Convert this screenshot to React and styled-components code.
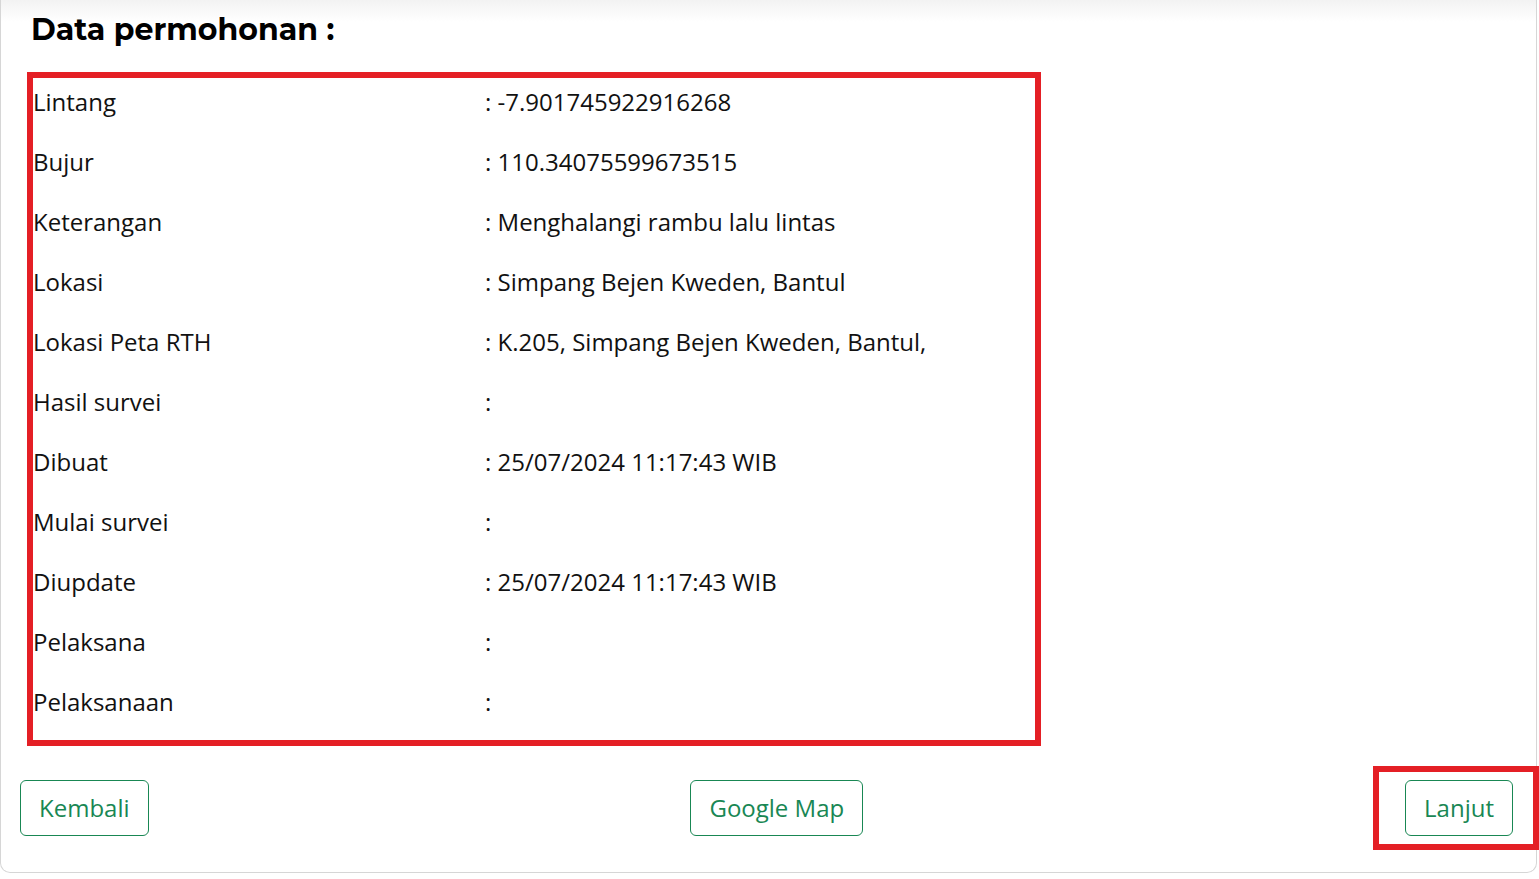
import React from 'react'
import styled, { createGlobalStyle } from 'styled-components'

const GlobalStyle = createGlobalStyle`
    body {
        margin: 0;
        background: #fff;
        font-family: "Open Sans", "Liberation Sans", sans-serif;
        color: #111;
    }
`

const Card = styled.div`
    box-sizing: border-box;
    width: 1537px;
    height: 881px;
    margin-top: -8px;
    padding: 8px 23px 0 19px;
    background: linear-gradient(#eeeeee, #ffffff 30px);
    border: 1px solid #d6d6d6;
    border-top: none;
    border-radius: 0 0 10px 10px;
    display: flex;
    flex-direction: column;
`

const Title = styled.h2`
    margin: 12px 0 0 11px;
    font-family: "Montserrat", Inter, "Noto Sans", sans-serif;
    font-weight: 700;
    font-size: 30px;
    line-height: 36px;
    color: #000;
`

const DetailBox = styled.div`
    margin: 24px 0 0 7px;
    width: 1014px;
    box-sizing: border-box;
    border: 6px solid #e41f25;
    padding: 6px 0 20px 0;
    display: flex;
    flex-direction: column;
    gap: 24px;
`

const Row = styled.div`
    display: flex;
    font-size: 24px;
    line-height: 36px;
`

const Label = styled.div`
    width: 452px;
    flex-shrink: 0;
`

const Value = styled.div`
    white-space: nowrap;
`

const Actions = styled.div`
    margin-top: 34px;
    display: flex;
    justify-content: space-between;
    align-items: center;
`

const OutlineButton = styled.button`
    font-family: "Open Sans", "Liberation Sans", sans-serif;
    font-size: 24px;
    line-height: 36px;
    padding: 9px 18px;
    color: #198754;
    background: #fff;
    border: 1px solid #198754;
    border-radius: 6px;
    cursor: pointer;
`

const Highlight = styled.span`
    position: relative;
    display: inline-flex;

    &::after {
        content: '';
        position: absolute;
        top: -14px;
        bottom: -14px;
        left: -32px;
        right: -26px;
        border: 6px solid #e41f25;
        pointer-events: none;
    }
`

const rows = [
    ['Lintang', '-7.901745922916268'],
    ['Bujur', '110.34075599673515'],
    ['Keterangan', 'Menghalangi rambu lalu lintas'],
    ['Lokasi', 'Simpang Bejen Kweden, Bantul'],
    ['Lokasi Peta RTH', 'K.205, Simpang Bejen Kweden, Bantul,'],
    ['Hasil survei', ''],
    ['Dibuat', '25/07/2024 11:17:43 WIB'],
    ['Mulai survei', ''],
    ['Diupdate', '25/07/2024 11:17:43 WIB'],
    ['Pelaksana', ''],
    ['Pelaksanaan', ''],
]

export default function App() {
    return (
        <>
            <GlobalStyle />
            <Card>
                <Title>Data permohonan :</Title>
                <DetailBox>
                    {rows.map(([label, value]) => (
                        <Row key={label}>
                            <Label>{label}</Label>
                            <Value>: {value}</Value>
                        </Row>
                    ))}
                </DetailBox>
                <Actions>
                    <OutlineButton>Kembali</OutlineButton>
                    <OutlineButton>Google Map</OutlineButton>
                    <Highlight>
                        <OutlineButton>Lanjut</OutlineButton>
                    </Highlight>
                </Actions>
            </Card>
        </>
    )
}
